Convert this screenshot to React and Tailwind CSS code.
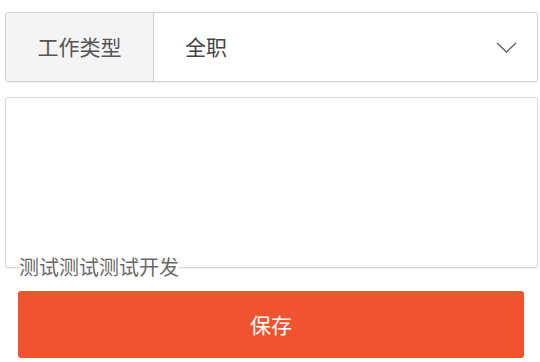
import React from 'react'

const font = { fontFamily: '"Noto Sans CJK SC", "Noto Sans", sans-serif' }

export default function App() {
	return (
		<div className="w-[540px] h-[362px] bg-white overflow-hidden" style={font}>
			<div className="pl-[5px] pr-[2px] pt-[12px]">
				<div className="flex h-[70px] border border-[#d2d2d2] rounded-[3px] overflow-hidden shadow-[0_1px_1px_rgba(0,0,0,0.06)]">
					<div className="w-[148px] shrink-0 bg-[#f4f4f4] border-r border-[#d2d2d2] flex items-center justify-center text-[21px] text-[#555]">
						工作类型
					</div>
					<div className="flex-1 flex items-center justify-between pl-[31px] pr-[20px] text-[21px] text-[#444]">
						<span>全职</span>
						<svg width="21" height="11" viewBox="0 0 21 11" fill="none" stroke="#666" strokeWidth="1.4">
							<path d="M1 1 L10.5 10 L20 1" />
						</svg>
					</div>
				</div>

				<div className="mt-[15px] h-[171px] border border-[#d8d8d8] rounded-[3px] shadow-[0_1px_1px_rgba(0,0,0,0.05)]" />
			</div>

			<div className="pl-[19px] -mt-[14px] leading-[26px]">
				<span className="inline-block bg-white text-[20px] text-[#6a6a6a]">测试测试测试开发</span>
			</div>

			<div className="pl-[18px] pr-[16px] mt-[10px]">
				<button className="w-full h-[67px] bg-[#f0532f] rounded-[3px] text-white text-[21px] flex items-center justify-center">
					保存
				</button>
			</div>
		</div>
	)
}
